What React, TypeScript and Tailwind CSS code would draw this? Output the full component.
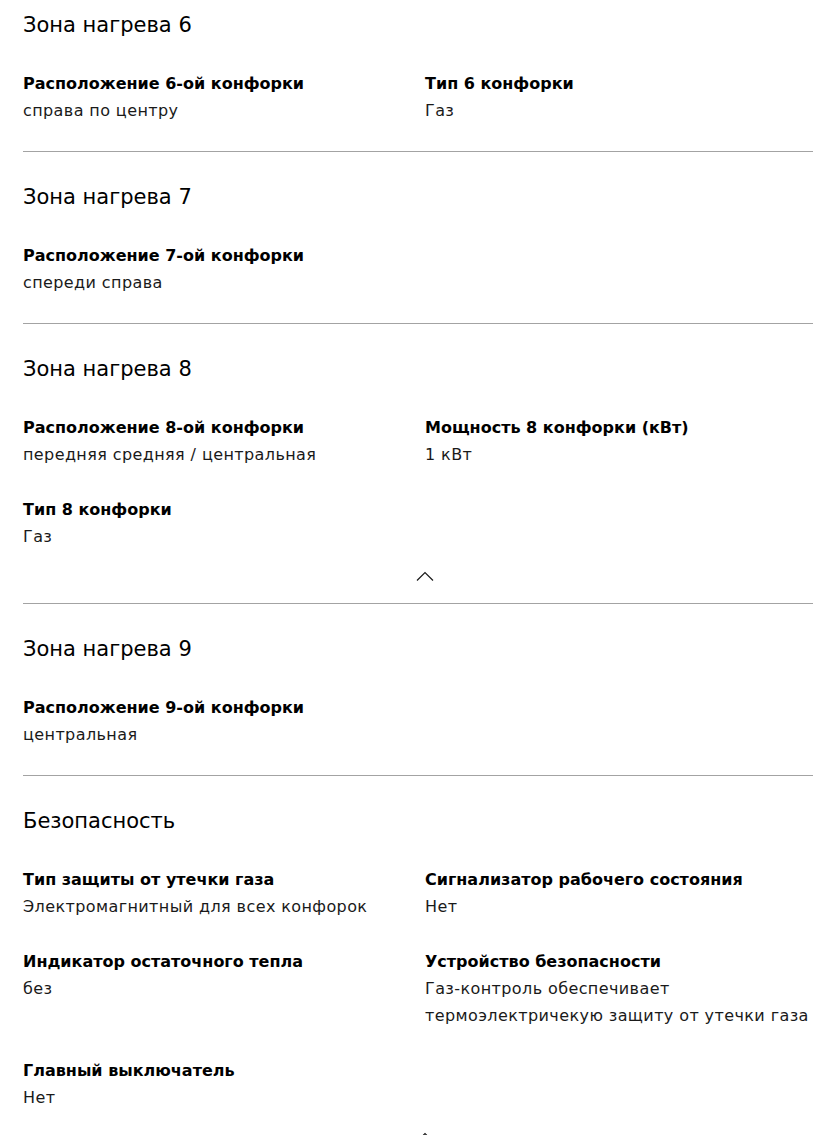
type Item = { label: string; value: string[] };
type Section = { title: string; items: Item[]; toggle?: boolean; first?: boolean };

const sections: Section[] = [
  {
    title: "Зона нагрева 6",
    first: true,
    items: [
      { label: "Расположение 6-ой конфорки", value: ["справа по центру"] },
      { label: "Тип 6 конфорки", value: ["Газ"] },
    ],
  },
  {
    title: "Зона нагрева 7",
    items: [{ label: "Расположение 7-ой конфорки", value: ["спереди справа"] }],
  },
  {
    title: "Зона нагрева 8",
    toggle: true,
    items: [
      { label: "Расположение 8-ой конфорки", value: ["передняя средняя / центральная"] },
      { label: "Мощность 8 конфорки (кВт)", value: ["1 кВт"] },
      { label: "Тип 8 конфорки", value: ["Газ"] },
    ],
  },
  {
    title: "Зона нагрева 9",
    items: [{ label: "Расположение 9-ой конфорки", value: ["центральная"] }],
  },
  {
    title: "Безопасность",
    toggle: true,
    items: [
      { label: "Тип защиты от утечки газа", value: ["Электромагнитный для всех конфорок"] },
      { label: "Сигнализатор рабочего состояния", value: ["Нет"] },
      { label: "Индикатор остаточного тепла", value: ["без"] },
      {
        label: "Устройство безопасности",
        value: ["Газ-контроль обеспечивает", "термоэлектричекую защиту от утечки газа"],
      },
      { label: "Главный выключатель", value: ["Нет"] },
    ],
  },
];

function Chevron() {
  return (
    <svg width="18" height="10" viewBox="0 0 18 10" fill="none">
      <path d="M1 9.5L9 1.5L17 9.5" stroke="#1a1a1a" strokeWidth="1.2" />
    </svg>
  );
}

function SpecSection({ section, last }: { section: Section; last: boolean }) {
  return (
    <div className={section.first ? "pt-[11px]" : "pt-[31px]"}>
      <h2 className="text-[21px] leading-[28px] text-[#000]">{section.title}</h2>
      <div className="mt-[31px] grid grid-cols-2 gap-x-[14px] gap-y-[28px]">
        {section.items.map((item) => (
          <div key={item.label}>
            <div className="text-[16px] leading-[27px] font-bold text-[#000]">{item.label}</div>
            {item.value.map((line) => (
              <div key={line} className="text-[16px] leading-[27px] tracking-[0.4px] text-[#1a1a1a]">
                {line}
              </div>
            ))}
          </div>
        ))}
      </div>
      {section.toggle ? (
        <div className="flex justify-center pl-[14px] pt-[21px] pb-[22px]">
          <Chevron />
        </div>
      ) : (
        <div className="h-[27px]" />
      )}
      {!last && <div className="h-px bg-[#a3a3a3]" />}
    </div>
  );
}

export default function App() {
  return (
    <div
      className="min-h-screen bg-white pl-[23px] overflow-hidden"
      style={{ fontFamily: '"DejaVu Sans", "Noto Sans", sans-serif' }}
    >
      {sections.map((s, i) => (
        <SpecSection key={s.title} section={s} last={i === sections.length - 1} />
      ))}
    </div>
  );
}
